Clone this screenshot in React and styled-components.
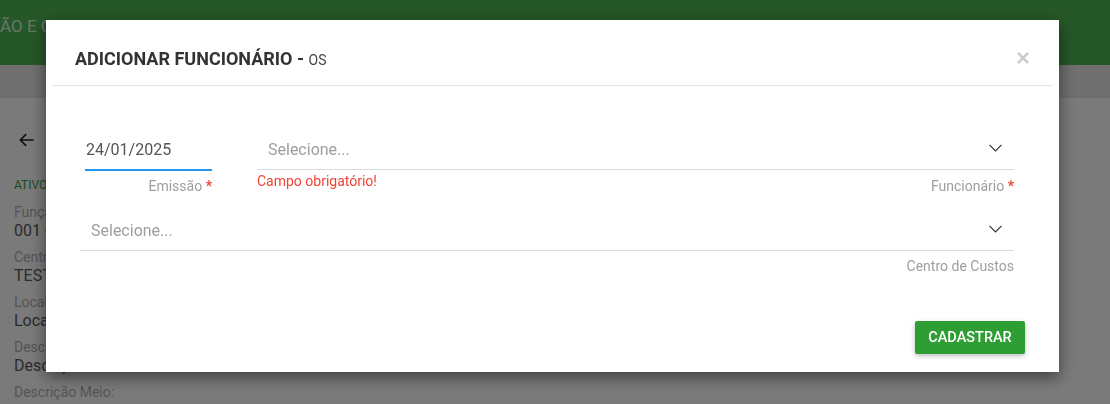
import styled, { createGlobalStyle } from 'styled-components';

const Global = createGlobalStyle`
  html, body { margin: 0; padding: 0; }
  body {
    font-family: Roboto, "Noto Sans", sans-serif;
    background: #f5f5f5;
    width: 1110px;
    height: 404px;
    overflow: hidden;
  }
`;

const Page = styled.div`
  width: 1110px;
  height: 404px;
  overflow: hidden;
  background: #f5f5f5;
`;

const TopBar = styled.header`
  height: 65px;
  background: #4caf50;
  display: flex;
  align-items: flex-start;
  padding-top: 16px;
  box-sizing: border-box;
  color: rgba(255, 255, 255, 0.75);
  font-size: 17px;
  white-space: nowrap;
`;

const SubBar = styled.div`
  height: 33px;
  background: #dedede;
`;

const Content = styled.div`
  padding: 32px 14px 0;
  display: flex;
  flex-direction: column;
`;

const Back = styled.div`
  width: 20px;
  height: 20px;
  margin: 0 0 27px 3px;
  color: #222;
`;

const Status = styled.div`
  color: #3a9a3e;
  font-size: 12px;
  line-height: 16px;
  margin-bottom: 10px;
`;

const InfoLabel = styled.div`
  color: #a8a8a8;
  font-size: 14px;
  line-height: 18px;
`;

const InfoValue = styled.div`
  color: #555;
  font-size: 16px;
  line-height: 20px;
  margin-bottom: 7px;
`;

const Overlay = styled.div`
  position: fixed;
  inset: 0;
  z-index: 10;
  background: rgba(0, 0, 0, 0.5);
  padding: 20px 0 0 46px;
  box-sizing: border-box;
`;

const Modal = styled.div`
  width: 1013px;
  height: 352px;
  background: #fff;
  box-shadow: 0 5px 15px rgba(0, 0, 0, 0.5);
  display: flex;
  flex-direction: column;
`;

const ModalHeader = styled.div`
  height: 65px;
  margin: 0 6px;
  padding: 0 23px;
  border-bottom: 1px solid #e5e5e5;
  display: flex;
  align-items: center;
  justify-content: space-between;
`;

const Title = styled.h4`
  margin: 12px 0 0;
  font-size: 18px;
  font-weight: 700;
  color: #333;
  small {
    font-size: 14px;
    font-weight: 400;
    color: #444;
  }
`;

const Close = styled.button`
  border: none;
  background: none;
  padding: 0;
  margin: 10px 0 0 0;
  font-family: "Liberation Sans", Arial, sans-serif;
  font-size: 24px;
  font-weight: 700;
  line-height: 1;
  color: #000;
  opacity: 0.2;
`;

const ModalBody = styled.div`
  padding: 43px 45px 0 34px;
  display: flex;
  flex-direction: column;
  gap: 16px;
  flex: 1;
`;

const Row = styled.div`
  display: flex;
  gap: 45px;
`;

const Field = styled.div`
  display: flex;
  flex-direction: column;
  flex: ${(p) => (p.grow ? 1 : '0 0 auto')};
  width: ${(p) => p.width || 'auto'};
  margin-left: ${(p) => p.offset || '0'};
`;

const Control = styled.div`
  height: 40px;
  display: flex;
  align-items: center;
  justify-content: space-between;
  padding: ${(p) => (p.select ? '0 12px 0 11px' : '0 1px')};
  border-bottom: ${(p) => (p.focused ? '2px solid #2196f3' : '1px solid #dcdcdc')};
  margin-bottom: ${(p) => (p.focused ? '0' : '1px')};
  font-size: 16px;
  color: ${(p) => (p.placeholder ? '#9e9e9e' : '#555')};
`;

const Chevron = styled.svg`
  width: 13px;
  height: 8px;
  margin-top: -2px;
`;

const Helper = styled.div`
  display: flex;
  justify-content: space-between;
  align-items: flex-start;
`;

const Error = styled.span`
  color: #f44336;
  font-size: 14px;
  line-height: 16px;
  margin-top: 2px;
`;

const Label = styled.span`
  margin-left: auto;
  margin-top: ${(p) => p.top || '7px'};
  color: #9e9e9e;
  font-size: 14px;
  line-height: 16px;
  b {
    color: #f44336;
    font-weight: 700;
  }
`;

const Footer = styled.div`
  display: flex;
  justify-content: flex-end;
  padding: 0 34px 18px;
`;

const Button = styled.button`
  width: 110px;
  height: 33px;
  border: none;
  border-radius: 2px;
  background: #2e9d33;
  color: #fff;
  font-family: Roboto, sans-serif;
  font-size: 14.5px;
  font-weight: 500;
  box-shadow: 0 2px 5px rgba(0, 0, 0, 0.26);
`;

function ChevronDown() {
  return (
    <Chevron viewBox="0 0 13 8">
      <polyline points="0.5,0.8 6.5,6.8 12.5,0.8" fill="none" stroke="#333" strokeWidth="1.2" />
    </Chevron>
  );
}

export default function App() {
  return (
    <Page>
      <Global />
      <TopBar>ÃO E CONTROLE</TopBar>
      <SubBar />
      <Content>
        <Back>
          <svg viewBox="0 0 24 24" width="20" height="20">
            <path d="M20 12H5M11 5l-7 7 7 7" fill="none" stroke="currentColor" strokeWidth="2" />
          </svg>
        </Back>
        <Status>ATIVO</Status>
        <InfoLabel>Função:</InfoLabel>
        <InfoValue>001 - MECÂNICO</InfoValue>
        <InfoLabel>Centro de Custos:</InfoLabel>
        <InfoValue>TESTE</InfoValue>
        <InfoLabel>Local:</InfoLabel>
        <InfoValue>Local Teste</InfoValue>
        <InfoLabel>Descrição Inicial:</InfoLabel>
        <InfoValue>Descrição Inicial</InfoValue>
        <InfoLabel>Descrição Meio:</InfoLabel>
      </Content>

      <Overlay>
        <Modal>
          <ModalHeader>
            <Title>
              ADICIONAR FUNCIONÁRIO - <small>OS</small>
            </Title>
            <Close>×</Close>
          </ModalHeader>
          <ModalBody>
            <Row>
              <Field width="127px" offset="5px">
                <Control focused>24/01/2025</Control>
                <Helper>
                  <Label>
                    Emissão <b>*</b>
                  </Label>
                </Helper>
              </Field>
              <Field grow>
                <Control select placeholder="1">
                  Selecione...
                  <ChevronDown />
                </Control>
                <Helper>
                  <Error>Campo obrigatório!</Error>
                  <Label>
                    Funcionário <b>*</b>
                  </Label>
                </Helper>
              </Field>
            </Row>
            <Row>
              <Field grow>
                <Control select placeholder="1">
                  Selecione...
                  <ChevronDown />
                </Control>
                <Helper>
                  <Label top="6px">Centro de Custos</Label>
                </Helper>
              </Field>
            </Row>
          </ModalBody>
          <Footer>
            <Button>CADASTRAR</Button>
          </Footer>
        </Modal>
      </Overlay>
    </Page>
  );
}
